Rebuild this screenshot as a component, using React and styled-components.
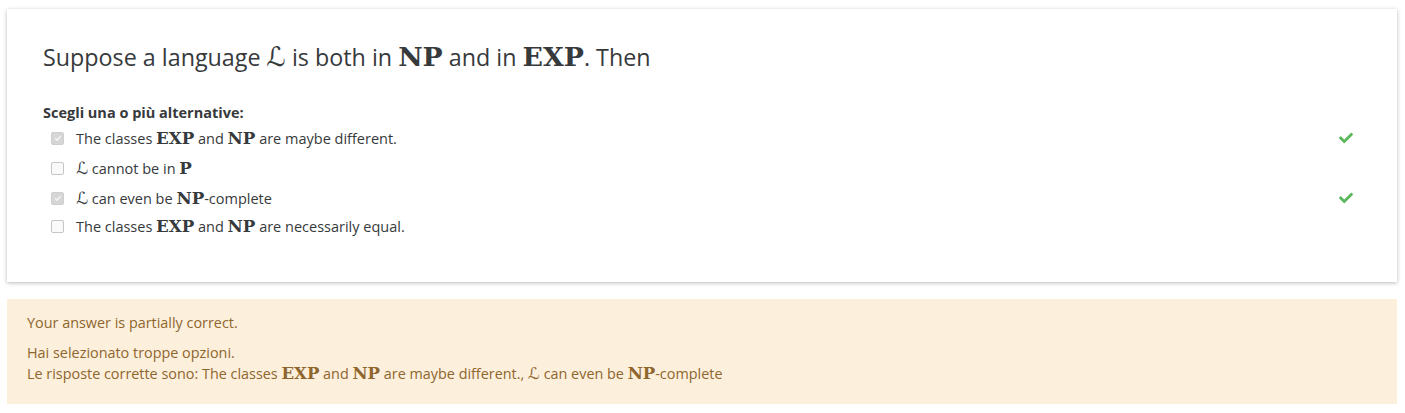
import React from 'react'
import styled, { createGlobalStyle } from 'styled-components'

const GlobalStyle = createGlobalStyle`
  body {
    margin: 0;
    background: #fff;
    font-family: "Segoe UI", "Open Sans", Lato, sans-serif;
    color: #373a3c;
  }
`

const options = [
  { id: 1, checked: true, correct: true, text: <>The classes <B>EXP</B> and <B>NP</B> are maybe different.</> },
  { id: 2, checked: false, tall: true, text: <><L /> cannot be in <B>P</B></> },
  { id: 3, checked: true, correct: true, text: <><L /> can even be <B>NP</B>-complete</> },
  { id: 4, checked: false, text: <>The classes <B>EXP</B> and <B>NP</B> are necessarily equal.</> },
]

function B({ children }) {
  return <MathBold>{children}</MathBold>
}

function L() {
  return <MathCal>ℒ</MathCal>
}

function Tick() {
  return (
    <TickIcon viewBox="0 0 512 512" aria-label="Corretta">
      <path d="M173.9 439.4l-166.4-166.4c-10-10-10-26.2 0-36.2l36.2-36.2c10-10 26.2-10 36.2 0L192 312.7 432.1 72.6c10-10 26.2-10 36.2 0l36.2 36.2c10 10 10 26.2 0 36.2L210.1 439.4c-10 10-26.2 10-36.2 0z" />
    </TickIcon>
  )
}

function Box({ checked }) {
  return (
    <CheckBox checked={checked}>
      {checked && (
        <svg viewBox="0 0 12 12" width="10" height="10">
          <path d="M2.5 6.2l2.3 2.3 4.7-5" fill="none" stroke="#f4f4f4" strokeWidth="1.8" />
        </svg>
      )}
    </CheckBox>
  )
}

export default function App() {
  return (
    <Page>
      <GlobalStyle />
      <Card>
        <Question>
          Suppose a language <L /> is both in <B>NP</B> and in <B>EXP</B>. Then
        </Question>
        <Prompt>Scegli una o più alternative:</Prompt>
        <Answers>
          {options.map(o => (
            <Row key={o.id} tall={o.tall}>
              <Label>
                <Box checked={o.checked} />
                <span>{o.text}</span>
              </Label>
              {o.correct && <Tick />}
            </Row>
          ))}
        </Answers>
      </Card>
      <Outcome>
        <Line>Your answer is partially correct.</Line>
        <Feedback>
          <div>Hai selezionato troppe opzioni.</div>
          <div>
            Le risposte corrette sono: The classes <B>EXP</B> and <B>NP</B> are maybe different., <L /> can even be <B>NP</B>-complete
          </div>
        </Feedback>
      </Outcome>
    </Page>
  )
}

const Page = styled.div`
  padding: 9px 8px 9px 7px;
`

const Card = styled.div`
  background: #fff;
  box-shadow: 0 1px 4px rgba(0, 0, 0, 0.28);
  padding: 34px 36px 42px 36px;
`

const Question = styled.div`
  font-size: 23.3px;
  line-height: 1.25;
  margin-bottom: 31px;
`

const MathBold = styled.span`
  font-family: "DejaVu Serif", "Liberation Serif", serif;
  font-weight: bold;
  font-size: 1.15em;
  line-height: 1;
`

const MathCal = styled.span`
  font-family: "DejaVu Sans", serif;
  font-style: italic;
  font-size: 1.15em;
  line-height: 1;
`

const Prompt = styled.div`
  font-size: 14.5px;
  font-weight: bold;
  margin-bottom: 2px;
`

const Answers = styled.div`
  display: flex;
  flex-direction: column;
  padding-left: 8px;
`

const Row = styled.div`
  display: flex;
  align-items: center;
  justify-content: space-between;
  height: ${p => (p.tall ? '32px' : '28px')};
  padding-right: 8px;
`

const Label = styled.div`
  display: flex;
  align-items: center;
  gap: 12px;
  font-size: 14.5px;
`

const CheckBox = styled.span`
  box-sizing: border-box;
  width: 13px;
  height: 13px;
  border-radius: 2px;
  border: 1px solid ${p => (p.checked ? '#cfcfcf' : '#c6c6c6')};
  background: ${p => (p.checked ? '#d6d6d6' : '#fafafa')};
  display: flex;
  align-items: center;
  justify-content: center;
`

const TickIcon = styled.svg`
  width: 14px;
  height: 14px;
  fill: #5cb85c;
`

const Outcome = styled.div`
  margin-top: 17px;
  background: #fcefdc;
  color: #8e662e;
  padding: 13px 20px 19px;
  font-size: 14.4px;
`

const Line = styled.div`
  line-height: 1.5;
  margin-bottom: 8px;
`

const Feedback = styled.div`
  line-height: 1.5;
`
